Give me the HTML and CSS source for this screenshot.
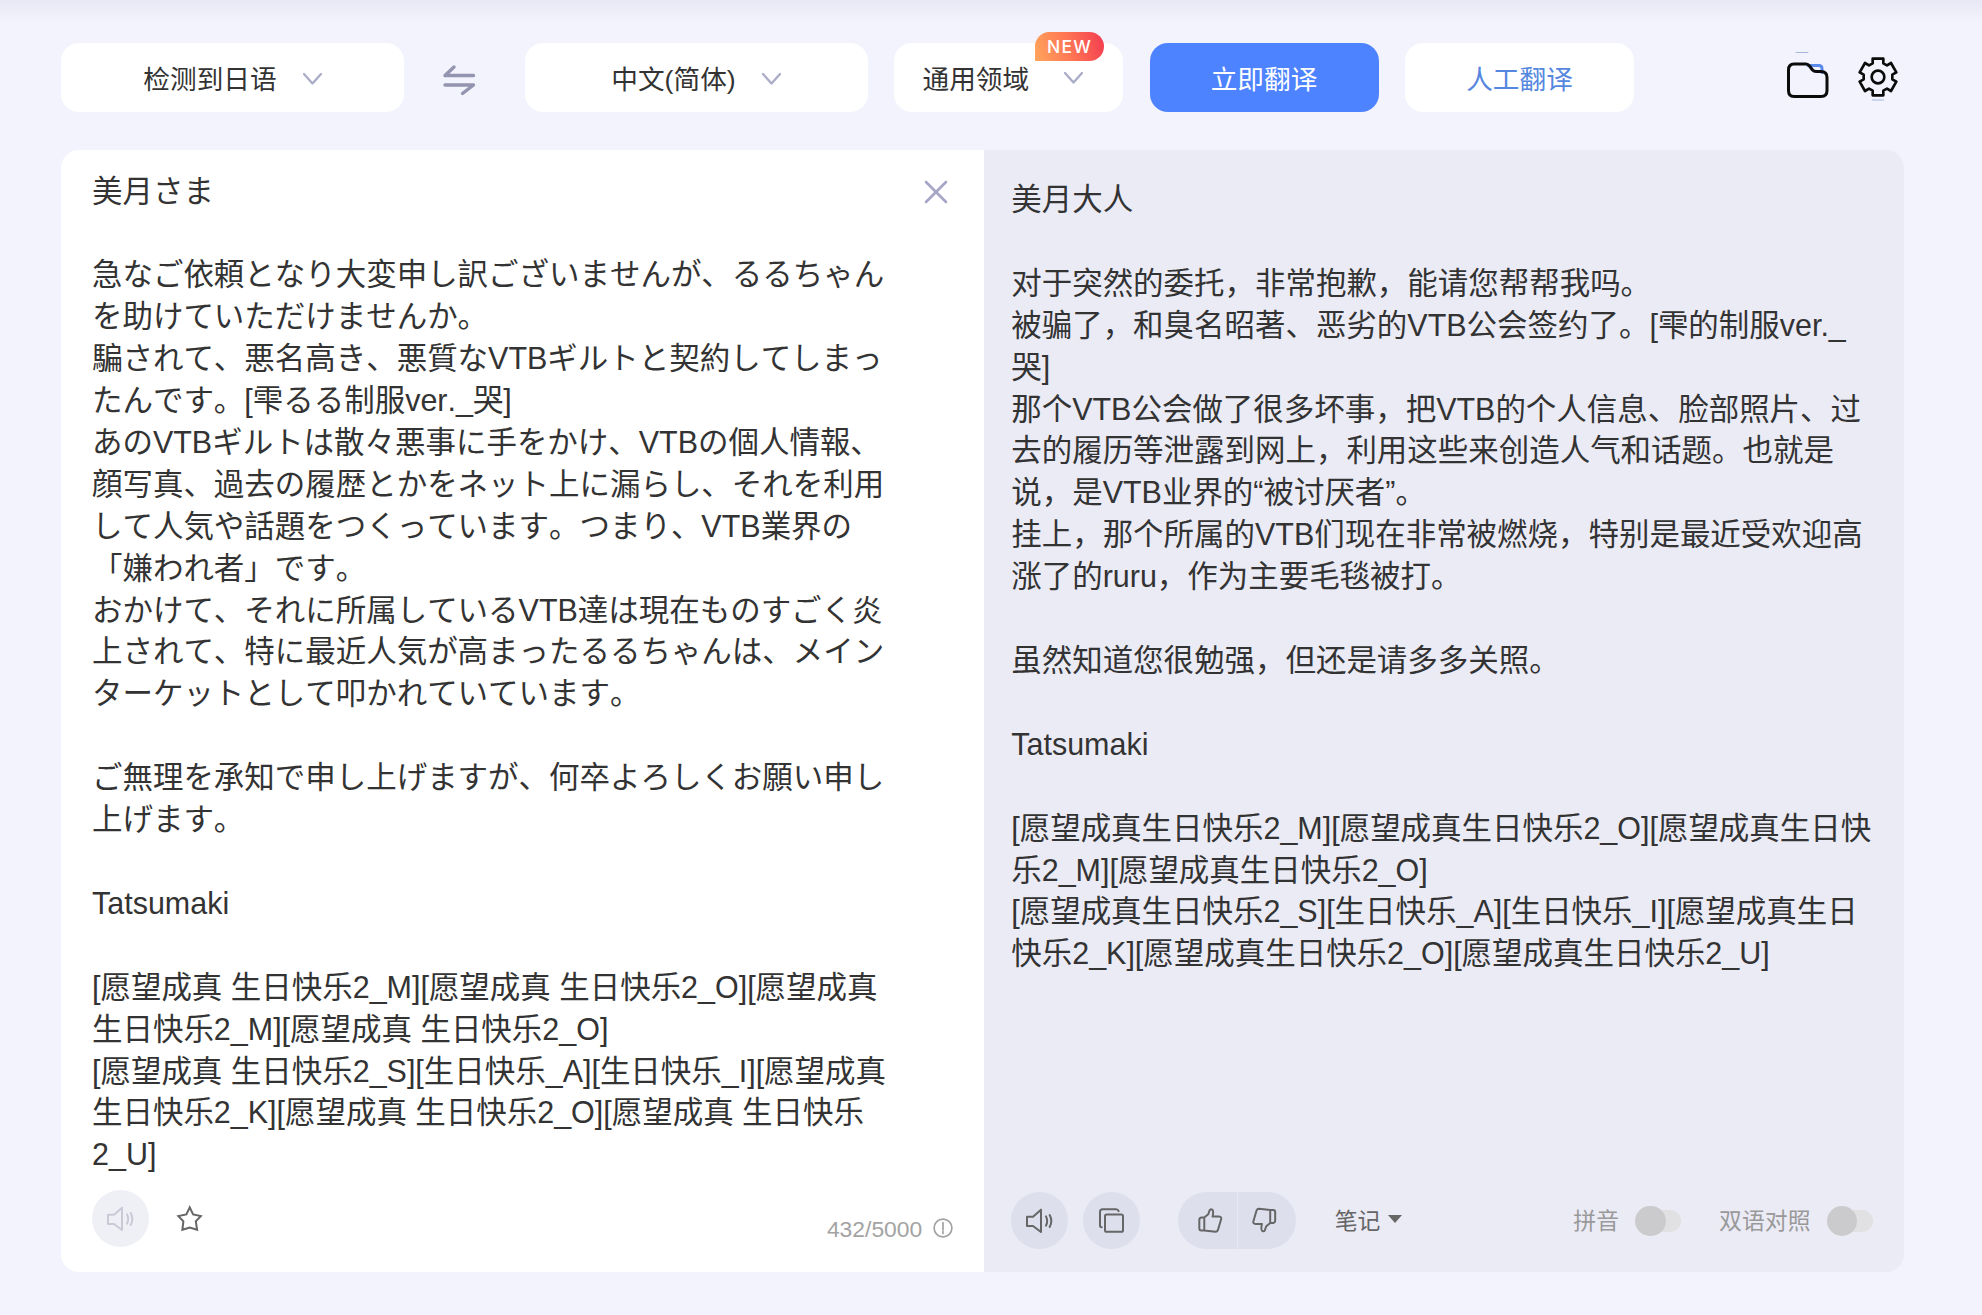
FILE: index.html
```html
<!DOCTYPE html>
<html lang="zh-CN">
<head>
  <meta charset="UTF-8">
  <title>翻译</title>
  <link rel="stylesheet" href="styles.css">
</head>
<body>

  <header class="toolbar">
    <button class="box lang">检测到日语
      <svg class="chevron" viewBox="0 0 19 12"><path d="M1 1l8.5 9.5L18 1"/></svg>
    </button>
    <svg class="swap" viewBox="0 0 34 32"><path d="M12 3L3 11.500H31.500M3 21H31.500L20.500 29.500"/></svg>
    <button class="box lang">中文(简体)
      <svg class="chevron" viewBox="0 0 19 12"><path d="M1 1l8.5 9.5L18 1"/></svg>
    </button>
    <button class="box field">通用领域
      <svg class="chevron" viewBox="0 0 19 12"><path d="M1 1l8.5 9.5L18 1"/></svg>
      <span class="badge">NEW</span>
    </button>
    <button class="box primary">立即翻译</button>
    <button class="box human">人工翻译</button>

    <div class="tools">
      <svg class="folder" viewBox="0 0 42 50">
        <path class="tick" d="M9 3.500h12"/>
        <path class="tab" d="M21 16.500h11q3 0 3 3v4"/>
        <path d="M7 15h12q2 0 3.500 2l3 4q1.500 1.500 3.500 1.500h5q6 0 6 6v13q0 6-6 6H7q-5.500 0-5.500-6V21q0-6 5.500-6z"/>
      </svg>
      <svg class="gear" viewBox="0 0 120 132">
        <path d="M44 5H76V19L87 25 99 18 115 46 103 53V67L115 74 99 102 87 95 76 101V115H44V101L33 95 21 102 5 74 17 67V53L5 46 21 18 33 25 44 19z"/>
        <circle cx="60" cy="60" r="19"/>
        <path class="tick" d="M43 129h34"/>
      </svg>
    </div>
  </header>

  <main class="panels">
    <section class="panel source">
      <div class="source-body">
        <div class="text">美月さま<br>
<br>
急なご依頼となり大変申し訳ございませんが、るるちゃん<br>
を助けていただけませんか。<br>
騙されて、悪名高き、悪質なVTBギルトと契約してしまっ<br>
たんです。[雫るる制服ver._哭]<br>
あのVTBギルトは散々悪事に手をかけ、VTBの個人情報、<br>
顔写真、過去の履歴とかをネット上に漏らし、それを利用<br>
して人気や話題をつくっています。つまり、VTB業界の<br>
「嫌われ者」です。<br>
おかけて、それに所属しているVTB達は現在ものすごく炎<br>
上されて、特に最近人気が高まったるるちゃんは、メイン<br>
ターケットとして叩かれていています。<br>
<br>
ご無理を承知で申し上げますが、何卒よろしくお願い申し<br>
上げます。<br>
<br>
<span class="name">Tatsumaki</span><br>
<br>
[愿望成真 生日快乐2_M][愿望成真 生日快乐2_O][愿望成真<br>
生日快乐2_M][愿望成真 生日快乐2_O]<br>
[愿望成真 生日快乐2_S][生日快乐_A][生日快乐_I][愿望成真<br>
生日快乐2_K][愿望成真 生日快乐2_O][愿望成真 生日快乐<br>
2_U]</div>
        <svg class="close" viewBox="0 0 24 24"><path d="M2 2l20 20M22 2L2 22"/></svg>
      </div>
      <div class="actions">
        <button class="round muted">
          <svg class="speaker" viewBox="0 0 90 78"><path d="M6 26H24L48 5V72L24 54H6zM63 25Q70 39 63 53M74 21Q84 39 74 57"/></svg>
        </button>
        <svg class="star" viewBox="0 0 82 82"><path d="M41 7L51 28 74 33 59 49 63 74 41 67 19 74 22 49 7 33 31 28z"/></svg>
        <div class="counter">432/5000
          <svg class="info" viewBox="0 0 20 20"><circle cx="10" cy="10" r="8.900"/><path d="M10 4.500v7.500M10 13.500v2"/></svg>
        </div>
      </div>
    </section>

    <section class="panel target">
      <div class="text">美月大人<br>
<br>
对于突然的委托，非常抱歉，能请您帮帮我吗。<br>
被骗了，和臭名昭著、恶劣的VTB公会签约了。[雫的制服ver._<br>
哭]<br>
那个VTB公会做了很多坏事，把VTB的个人信息、脸部照片、过<br>
去的履历等泄露到网上，利用这些来创造人气和话题。也就是<br>
说，是VTB业界的“被讨厌者”。<br>
挂上，那个所属的VTB们现在非常被燃烧，特别是最近受欢迎高<br>
涨了的ruru，作为主要毛毯被打。<br>
<br>
虽然知道您很勉强，但还是请多多关照。<br>
<br>
Tatsumaki<br>
<br>
[愿望成真生日快乐2_M][愿望成真生日快乐2_O][愿望成真生日快<br>
乐2_M][愿望成真生日快乐2_O]<br>
[愿望成真生日快乐2_S][生日快乐_A][生日快乐_I][愿望成真生日<br>
快乐2_K][愿望成真生日快乐2_O][愿望成真生日快乐2_U]</div>
      <div class="actions">
        <button class="round">
          <svg class="speaker" viewBox="0 0 90 78"><path d="M6 26H24L48 5V72L24 54H6zM63 25Q70 39 63 53M74 21Q84 39 74 57"/></svg>
        </button>
        <button class="round">
          <svg class="copy" viewBox="0 0 84 80"><path d="M62 12Q60 6 54 6H14Q6 6 6 14V54Q6 60 11 60"/><rect x="21" y="22" width="54" height="52" rx="5"/></svg>
        </button>
        <div class="votes">
          <button class="vote">
            <svg class="thumb" viewBox="0 0 80 80"><path d="M22 32L34 22 38 10Q41 5 46 8 51 12 47 29H68Q74 30 73 36L63 70Q61 75 56 75L22 71zM22 32H13Q7 33 7 39V65Q7 71 13 71H22"/></svg>
          </button>
          <button class="vote">
            <svg class="thumb down" viewBox="0 0 80 80"><path d="M22 32L34 22 38 10Q41 5 46 8 51 12 47 29H68Q74 30 73 36L63 70Q61 75 56 75L22 71zM22 32H13Q7 33 7 39V65Q7 71 13 71H22"/></svg>
          </button>
        </div>
        <div class="notes"><span class="label">笔记</span><span class="caret"></span></div>
        <div class="switches">
          <label class="option"><span class="label">拼音</span><span class="switch"></span></label>
          <label class="option"><span class="label">双语对照</span><span class="switch"></span></label>
        </div>
      </div>
    </section>
  </main>

</body>
</html>
```

FILE: styles.css
```css
* {
  box-sizing: border-box;
}

body {
  margin: 0;
  padding: 43px 78px 0 61px;
  font-family: "Liberation Sans", "Noto Sans CJK SC", sans-serif;
  color: #333;
  background: linear-gradient(#e8e8f5, #f2f3fc 22px) no-repeat #f2f3fc;
  text-spacing-trim: space-all;
}

button {
  border: 0;
  padding: 0;
  font: inherit;
  color: inherit;
  cursor: pointer;
}

svg {
  display: block;
  flex: none;
  fill: none;
  stroke: currentColor;
  stroke-linecap: round;
  stroke-linejoin: round;
}

/* top bar */
.toolbar {
  display: flex;
  align-items: center;
  height: 69px;
}

.box {
  position: relative;
  display: flex;
  align-items: center;
  justify-content: center;
  width: 229px;
  height: 69px;
  border-radius: 18px;
  background: #fff;
  font-size: 26.67px;
  margin-right: 26.5px;
  padding-bottom: 1px;
  white-space: nowrap;
  flex: none;
}

.lang {
  width: 343px;
  gap: 26px;
}

.lang:first-child {
  margin-right: 0;
}

.field {
  justify-content: space-between;
  padding: 0 40px 1px 28.5px;
}

.primary {
  background: #4d83ff;
  color: #fff;
}

.human {
  color: #5587e0;
}

.chevron {
  width: 19px;
  height: 12px;
  margin-top: 4px;
  color: #aaacc8;
  stroke-width: 2.3;
}

.field .chevron {
  margin-top: 1px;
}

.swap {
  width: 34px;
  height: 32px;
  margin: 5px 48.5px 0 38px;
  color: #9294b0;
  stroke-width: 3.4;
}

.badge {
  position: absolute;
  top: -11px;
  right: 19px;
  width: 69px;
  height: 29px;
  border-radius: 15px 15px 15px 0;
  background: linear-gradient(75deg, #ffa55c, #ff7a55 45%, #f33b50);
  color: #fff;
  font: 17.5px/30px Inter, sans-serif;
  font-weight: 500;
  letter-spacing: 1.2px;
  text-align: center;
}

.tools {
  display: flex;
  align-self: flex-start;
  align-items: flex-start;
  margin: 6px 6px 0 auto;
  gap: 29px;
  color: #0b0b0b;
}

.folder {
  width: 42px;
  height: 50px;
  stroke-width: 3;
}

.folder .tab {
  stroke: #5b8bea;
}

.tick,
.folder .tick {
  stroke: #a5b7df;
  stroke-width: 1;
}

.gear {
  width: 40px;
  height: 44px;
  margin-top: 8px;
  stroke-width: 8;
}

.gear .tick {
  stroke-width: 3;
}

/* panels */
.panels {
  display: flex;
  height: 1122px;
  margin-top: 38px;
  border-radius: 18px;
  overflow: hidden;
}

.panel {
  flex: 1;
  display: flex;
  flex-direction: column;
  justify-content: space-between;
}

.source {
  background: #fff;
  padding: 20.5px 31px 25px;
}

.target {
  background: #ebebf6;
  padding: 29px 31.5px 23px 27px;
}

.source-body {
  display: flex;
  justify-content: space-between;
}

.text {
  font-size: 30.48px;
  line-height: 41.91px;
  white-space: nowrap;
}

/* keep kana on the full-width grid */
.source .text {
  font-kerning: none;
}

.source .name {
  font-kerning: normal;
}

.close {
  width: 24px;
  height: 24px;
  margin: 9px 5px 0 0;
  color: #a5a6c5;
  stroke-width: 2.6;
}

.actions {
  display: flex;
  align-items: center;
  height: 57px;
  font-size: 22.86px;
  color: #666;
}

.round {
  display: flex;
  align-items: center;
  justify-content: center;
  width: 57px;
  height: 57px;
  margin-right: 15px;
  border-radius: 50%;
  background: #dddfed;
}

.muted {
  background: #eff0f6;
  color: #c9cad6;
}

.speaker {
  width: 30px;
  height: 26px;
  stroke-width: 6;
}

.copy {
  width: 28px;
  height: 27px;
  stroke-width: 6;
}

.star {
  width: 27.5px;
  height: 27.5px;
  margin: 0 0 0 12px;
  stroke-width: 6;
  stroke-linejoin: miter;
}

.counter {
  display: flex;
  align-items: center;
  gap: 11px;
  margin-left: auto;
  margin-top: 21px;
  color: #a3a3a3;
}

.info {
  width: 20px;
  height: 20px;
  margin-top: -2px;
  stroke-width: 1.7;
}

.votes {
  display: flex;
  width: 118px;
  height: 57px;
  margin-left: 23px;
  border-radius: 29px;
  background: #dddfed;
}

.vote {
  width: 59px;
  display: flex;
  align-items: center;
  background: none;
  padding-left: 19px;
}

.vote + .vote {
  border-left: 1.5px solid #e8e9f5;
  padding-left: 13px;
}

.thumb {
  width: 26.5px;
  height: 26.5px;
  stroke-width: 6;
}

.down {
  transform: rotate(180deg);
}

.notes {
  display: flex;
  align-items: center;
  gap: 8px;
  margin-left: 38.5px;
}

.label {
  padding-bottom: 4px;
}

.caret {
  margin-bottom: 3px;
  border: 7px solid transparent;
  border-top: 8px solid #666;
  border-bottom: 0;
}

.switches {
  display: flex;
  gap: 38px;
  margin-left: auto;
  color: #999;
}

.option {
  display: flex;
  align-items: center;
  gap: 17px;
}

.switch {
  position: relative;
  width: 45px;
  height: 22px;
  border-radius: 11px;
  background: #e1e1e3;
}

.switch::before {
  content: "";
  position: absolute;
  left: -1px;
  top: -4px;
  width: 30.5px;
  height: 30.5px;
  border-radius: 50%;
  background: #cbcbcd;
}
```
